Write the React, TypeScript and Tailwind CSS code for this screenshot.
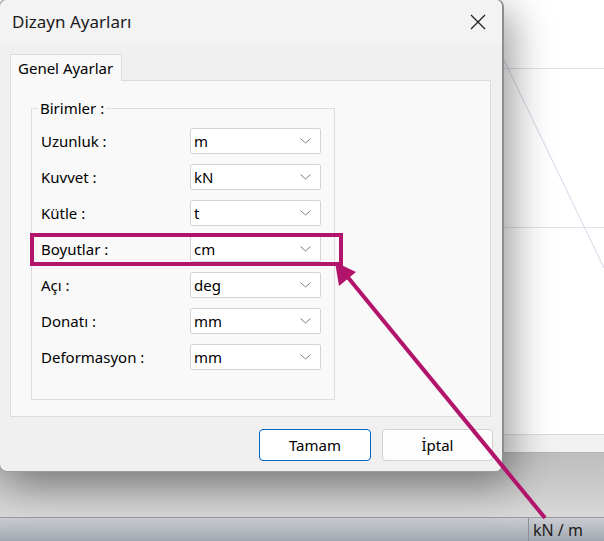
import React from 'react';

type UnitRow = {
  label: string;
  value: string;
};

const units: UnitRow[] = [
  { label: 'Uzunluk :', value: 'm' },
  { label: 'Kuvvet :', value: 'kN' },
  { label: 'Kütle :', value: 't' },
  { label: 'Boyutlar :', value: 'cm' },
  { label: 'Açı :', value: 'deg' },
  { label: 'Donatı :', value: 'mm' },
  { label: 'Deformasyon :', value: 'mm' },
];

const font = { fontFamily: '"Noto Sans", "Liberation Sans", sans-serif' };

function Chevron() {
  return (
    <svg width="11" height="6" viewBox="0 0 11 6" fill="none">
      <path d="M0.5 0.5 L5.5 5 L10.5 0.5" stroke="#7a7a7a" strokeWidth="1" />
    </svg>
  );
}

function UnitSelect({ value }: { value: string }) {
  return (
    <div className="flex h-[26px] w-[131px] items-center justify-between rounded-[2px] border border-[#d4d4d4] bg-white pl-[3px] pr-[9px] text-[15px] text-black">
      <span className="leading-none">{value}</span>
      <Chevron />
    </div>
  );
}

function CanvasLines() {
  // faint grid / member lines of the model view behind the dialog
  return (
    <svg className="absolute inset-0" width="604" height="435">
      <line x1="503" y1="68.5" x2="604" y2="68.5" stroke="#e2e2ee" strokeWidth="1" />
      <line x1="503" y1="227.5" x2="604" y2="227.5" stroke="#e2e2ee" strokeWidth="1" />
      <line x1="503" y1="58" x2="604" y2="268" stroke="#d6d6e8" strokeWidth="1" />
    </svg>
  );
}

function Dialog() {
  return (
    <div className="absolute left-[-1px] top-[-1px] flex h-[473px] w-[505px] flex-col overflow-hidden rounded-[8px] border border-r-2 border-[#9c9c9c] border-r-[#8e8e8e] bg-[#f0f0f0] shadow-[8px_12px_40px_rgba(0,0,0,0.4)]">
      {/* title bar */}
      <div className="flex h-[44px] shrink-0 items-center justify-between bg-[#f3f3f3] pl-[12px] pr-[16px]">
        <span className="text-[17px] text-[#1b1b1b]">Dizayn Ayarları</span>
        <svg width="16" height="16" viewBox="0 0 16 16" fill="none">
          <path d="M1 1 L15 15 M15 1 L1 15" stroke="#1b1b1b" strokeWidth="1.2" />
        </svg>
      </div>

      {/* tab strip */}
      <div className="flex pl-[10px] pt-[10px]">
        <div className="relative z-10 -mb-px flex h-[27px] w-[112px] items-center border border-b-0 border-[#dcdcdc] bg-[#f9f9f9] pl-[7px] text-[15px] text-black">
          Genel Ayarlar
        </div>
      </div>

      {/* tab page */}
      <div className="ml-[10px] mr-[11px] h-[337px] border border-[#dcdcdc] bg-[#f9f9f9] pl-[20px] pt-[27px]">
        <div className="relative h-[292px] w-[304px] border border-[#dcdcdc] pt-[19px]">
          <span className="absolute left-[6px] top-[-12px] bg-[#f9f9f9] px-[2px] text-[15px] leading-[22px] text-black">
            Birimler :
          </span>
          <div className="flex flex-col gap-[10px]">
            {units.map((u) => (
              <div key={u.label} className="flex items-center">
                <span className="w-[158px] pl-[9px] text-[15px] text-black">{u.label}</span>
                <UnitSelect value={u.value} />
              </div>
            ))}
          </div>
        </div>
      </div>

      {/* buttons */}
      <div className="flex justify-end gap-[11px] pr-[9px] pt-[12px]">
        <button className="h-[32px] w-[112px] rounded-[4px] border border-[#0067c0] bg-white text-[15px] text-black">
          Tamam
        </button>
        <button className="h-[32px] w-[111px] rounded-[4px] border border-[#d0d0d0] bg-[#fdfdfd] text-[15px] text-black">
          İptal
        </button>
      </div>
    </div>
  );
}

function Callout() {
  // magenta frame round the Boyutlar row and the pointer arrow
  return (
    <svg className="absolute inset-0" width="604" height="541">
      <rect x="32" y="235" width="309" height="29" fill="none" stroke="#b3146b" strokeWidth="4" />
      <line x1="545" y1="518" x2="346" y2="275" stroke="#b3146b" strokeWidth="4" />
      <polygon points="335,262 356,272 339,286" fill="#b3146b" />
    </svg>
  );
}

export default function App() {
  return (
    <div className="relative h-[541px] w-[604px] overflow-hidden bg-white" style={font}>
      <div className="flex h-full flex-col">
        <div className="relative h-[434px] shrink-0 bg-white">
          <CanvasLines />
        </div>
        <div className="h-[19px] shrink-0 border-t border-[#d8dce2] border-b border-b-[#b4b4b4] bg-[#f2f2f2]" />
        <div className="h-[64px] shrink-0 bg-gradient-to-b from-[#bdbdbd] to-[#d8d8d8]" />
        <div className="flex h-[24px] shrink-0 border-t border-[#9a9a9a] bg-gradient-to-b from-[#c9ccd2] to-[#a3a8b0]">
          <div className="flex-1" />
          <div className="flex w-[76px] items-center border-l border-[#8a8e96] pl-[4px] text-[16px] leading-none text-[#1d1d1d]">
            kN / m
          </div>
        </div>
      </div>
      <Dialog />
      <Callout />
    </div>
  );
}
